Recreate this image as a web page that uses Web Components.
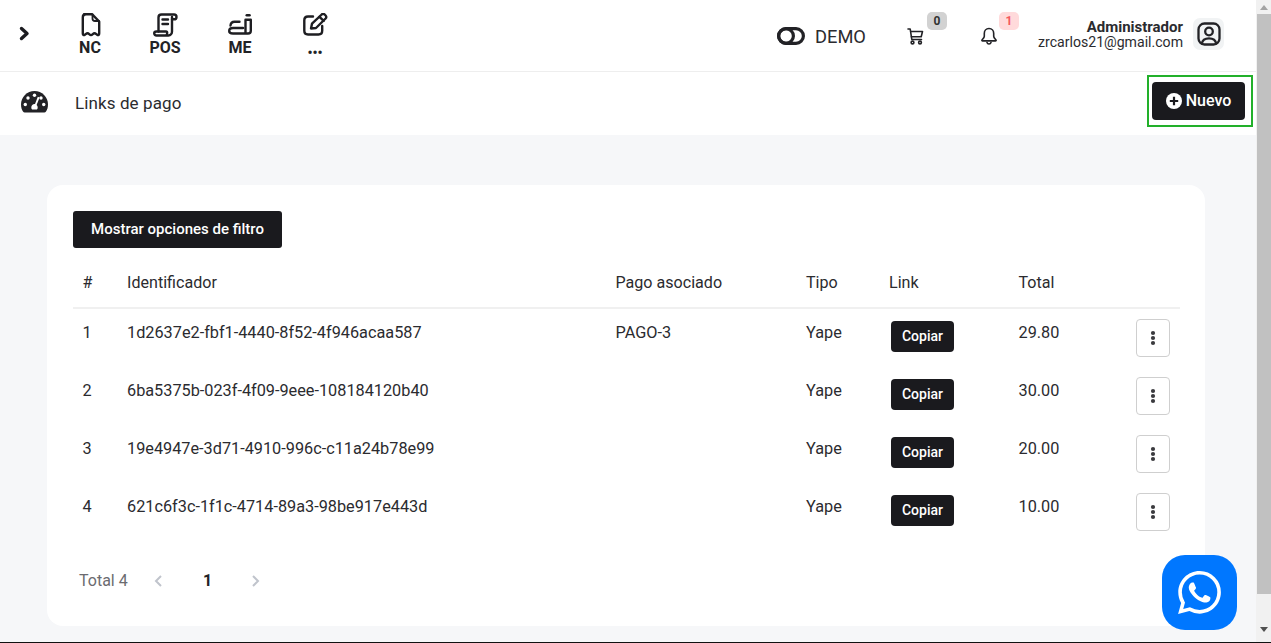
<!DOCTYPE html>
<html lang="es">
<head>
<meta charset="utf-8">
<title>Links de pago</title>
<style>
html,body{margin:0;padding:0;height:643px;overflow:hidden;background:#f6f7f9;font-family:Roboto,"Liberation Sans",sans-serif;color:#2b2b2f}
</style>
</head>
<body>
<app-shell>
  <top-bar></top-bar>
  <page-title heading="Links de pago"></page-title>
  <links-card>
    <link-row n="1" ident="1d2637e2-fbf1-4440-8f52-4f946acaa587" pago="PAGO-3" total="29.80"></link-row>
    <link-row n="2" ident="6ba5375b-023f-4f09-9eee-108184120b40" total="30.00"></link-row>
    <link-row n="3" ident="19e4947e-3d71-4910-996c-c11a24b78e99" total="20.00"></link-row>
    <link-row n="4" ident="621c6f3c-1f1c-4714-89a3-98be917e443d" total="10.00"></link-row>
  </links-card>
</app-shell>
<script>
function el(name, css, html){
  customElements.define(name, class extends HTMLElement{
    connectedCallback(){
      if(this.shadowRoot) return;
      const r=this.attachShadow({mode:'open'});
      const a=k=>this.getAttribute(k)||'';
      r.innerHTML='<style>'+css+'</style>'+(typeof html==='function'?html(a):html);
    }
  });
}
const ICONS={
 nc:'<svg width="24" height="25" viewBox="0 0 24 25" fill="none" stroke="#1e1e22" stroke-width="2.400" stroke-linecap="round" stroke-linejoin="round"><path d="M6 1.300h8.200l7 7.200v12c0 1.300-1 2-2 1.300-1.200-.8-1.600-1.500-2.800-1.500-1.300 0-1.900 1.800-3.400 1.800s-2.100-1.800-3.400-1.800c-1.200 0-1.600.7-2.800 1.500-1 .7-2-.0-2-1.300V4.300c0-1.700 1.300-3 3.200-3z"/><path d="M14.500 1.500v4c0 1.500 1.200 2.500 2.500 2.500h4" stroke-width="1.800"/></svg>',
 pos:'<svg width="25" height="25" viewBox="0 0 25 25" fill="none" stroke="#1e1e22" stroke-width="2.400" stroke-linecap="round" stroke-linejoin="round"><path d="M5.500 18.500V4.500c0-1.700 1.300-3 3-3h12.500c1.500 0 2.500 1.100 2.500 2.400s-1 2.400-2.500 2.400h-2"/><path d="M19 4v14.500c0 2.200-1.400 4-3.600 4H3.500c-1.400 0-2.300-1-2.300-2.200s.9-1.800 2.300-1.800H13c.8 0 1.200.6 1.200 1.400 0 1.200-.6 2.200-1.600 2.600"/><path d="M9.500 6.500h5.500M9.500 11h5.500"/></svg>',
 me:'<svg width="25" height="24" viewBox="0 0 25 24" fill="none" stroke="#1e1e22" stroke-width="2.400" stroke-linecap="round" stroke-linejoin="round"><path d="M11.500 8.800H6.500C4 8.800 2.700 10.500 2.500 12.500"/><path d="M15 15H5c-2.500 0-3.800 1.300-3.800 2.900S2.500 20.500 5 20.500h15c1.700 0 2.800-1.100 2.800-2.800V6.800h-5.300V19.500"/><rect x="17.500" y="1" width="5.300" height="2.600" rx="1.300" fill="#1e1e22" stroke="none"/></svg>',
 pen:'<svg width="25" height="23" viewBox="0 0 25 23" fill="none" stroke="#1e1e22" stroke-width="2.400" stroke-linecap="round" stroke-linejoin="round"><path d="M10 3.500H5c-2.200 0-3.700 1.500-3.700 3.700v10.600c0 2.200 1.500 3.700 3.700 3.700h10.500c2.200 0 3.700-1.500 3.700-3.700V13"/><path d="M8 15.500l1-4.800L18.700 1.500c.9-.8 2-.8 2.900 0l1 1c.8.9.8 2.100 0 3L13 15l-5 .5z"/><path d="M16.500 3.800l4.200 4"/></svg>',
 gauge:'<svg width="27" height="22" viewBox="0 0 27 22"><path fill="#222226" d="M13.500 0C6 0 0 6 0 13.500c0 2.600.7 5 2 7 .4.600 1 1 1.700 1h19.600c.7 0 1.300-.4 1.700-1 1.300-2 2-4.400 2-7C27 6 21 0 13.500 0z"/><g fill="#fff"><circle cx="13.500" cy="4.300" r="1.700"/><circle cx="7" cy="7" r="1.700"/><circle cx="4.300" cy="13.500" r="1.700"/><circle cx="22.700" cy="13.500" r="1.700"/><circle cx="20" cy="7" r="1.700"/><path d="M16.800 5.800l1.800.7-3 7.500c.7.600 1.100 1.400 1.100 2.400 0 .9-.3 1.600-.8 2.200h-4.800c-.5-.6-.8-1.300-.8-2.200 0-1.800 1.500-3.300 3.300-3.300h.4z"/></g></svg>',
 demo:'<svg width="28" height="18" viewBox="0 0 28 18" fill="none" stroke="#222226" stroke-width="3.200"><rect x="1.600" y="1.600" width="24.800" height="14.800" rx="7.400"/><circle cx="9" cy="9" r="7.400"/></svg>',
 cart:'<svg width="17" height="17" viewBox="0 0 17 17" fill="none" stroke="#222226" stroke-width="1.600" stroke-linecap="round" stroke-linejoin="round"><path d="M1 1h2.200l1.600 10.500h9.700"/><path d="M3.700 3.500H15.500l-1.300 5.200H4.400"/><circle cx="5.500" cy="14.500" r="1.400"/><circle cx="13" cy="14.500" r="1.400"/></svg>',
 bell:'<svg width="16" height="18" viewBox="0 0 16 18" fill="none" stroke="#222226" stroke-width="1.600" stroke-linecap="round" stroke-linejoin="round"><path d="M8 1.500c-3 0-4.700 2.300-4.700 5v2.700c0 1.500-1.300 2.600-2.300 3.800-.3.400 0 .9.500.9h13c.5 0 .8-.5.500-.9-1-1.200-2.300-2.300-2.300-3.800V6.500c0-2.700-1.700-5-4.700-5z"/><path d="M6 15.500c.3 1 1 1.500 2 1.500s1.700-.5 2-1.500"/></svg>',
 avatar:'<svg width="24" height="24" viewBox="0 0 24 24" fill="none" stroke="#222226" stroke-width="2.300" stroke-linecap="round" stroke-linejoin="round"><rect x="1.500" y="1.500" width="21" height="21" rx="6"/><circle cx="12" cy="9.500" r="3.800"/><path d="M4.800 21.500c.6-3.500 3-5.200 7.200-5.200s6.600 1.700 7.200 5.200"/></svg>',
 plus:'<svg width="16" height="16" viewBox="0 0 16 16"><circle cx="8" cy="8" r="8" fill="#fff"/><path d="M8 3.800v8.400M3.800 8h8.400" stroke="#1a1a1e" stroke-width="2.200"/></svg>',
 wa:'<svg width="43" height="43" viewBox="0 0 24 24"><path fill="#fff" d="M17.472 14.382c-.297-.149-1.758-.867-2.030-.967-.273-.099-.471-.148-.670.150-.197.297-.767.966-.940 1.164-.173.199-.347.223-.644.075-.297-.150-1.255-.463-2.390-1.475-.883-.788-1.480-1.761-1.653-2.059-.173-.297-.018-.458.130-.606.134-.133.298-.347.446-.520.149-.174.198-.298.298-.497.099-.198.050-.371-.025-.520-.075-.149-.669-1.612-.916-2.207-.242-.579-.487-.500-.669-.510-.173-.008-.371-.010-.570-.010-.198 0-.520.074-.792.372-.272.297-1.040 1.016-1.040 2.479 0 1.462 1.065 2.875 1.213 3.074.149.198 2.096 3.200 5.077 4.487.709.306 1.262.489 1.694.625.712.227 1.360.195 1.871.118.571-.085 1.758-.719 2.006-1.413.248-.694.248-1.289.173-1.413-.074-.124-.272-.198-.570-.347m-5.421 7.403h-.004a9.870 9.870 0 01-5.031-1.378l-.361-.214-3.741.982.998-3.648-.235-.374a9.860 9.860 0 01-1.510-5.260c.001-5.450 4.436-9.884 9.888-9.884 2.640 0 5.122 1.030 6.988 2.898a9.825 9.825 0 012.893 6.994c-.003 5.450-4.437 9.884-9.885 9.884m8.413-18.297A11.815 11.815 0 0012.050 0C5.495 0 .160 5.335.157 11.892c0 2.096.547 4.142 1.588 5.945L.057 24l6.305-1.654a11.882 11.882 0 005.683 1.448h.005c6.554 0 11.890-5.335 11.893-11.893a11.821 11.821 0 00-3.480-8.413z"/></svg>',
 kebab:'<svg width="6" height="16" viewBox="0 0 6 16" fill="#3a3a3e"><circle cx="3" cy="3" r="2.100"/><circle cx="3" cy="8" r="2.100"/><circle cx="3" cy="13" r="2.100"/></svg>'
};

el('app-shell',`
 :host{display:flex;flex-direction:column;height:643px;width:1271px;position:relative;font-family:Roboto,"Liberation Sans",sans-serif}
 .row{display:flex;height:642px;min-height:0}
 .main{width:1256px;flex:none;overflow:hidden;display:flex;flex-direction:column}
 .end{height:1px;background:#111;flex:none}
 .wa{position:absolute;left:1162px;top:555px;width:75px;height:75px;border-radius:23px;background:#0077ff;display:flex;align-items:center;justify-content:center}
`,`<div class="row"><div class="main"><slot></slot></div><fake-scrollbar></fake-scrollbar></div><div class="end"></div><div class="wa">${ICONS.wa}</div>`);

el('fake-scrollbar',`
 :host{display:flex;flex-direction:column;width:15px;background:#f1f1f1;align-items:stretch;flex:none}
 .b{height:14px;display:flex;align-items:center;justify-content:center;flex:none}
 .t{height:580px;background:#c1c1c1;margin-left:1px;flex:none}
 .sp{flex:1}
`,`<div class="b"><svg width="8" height="5" viewBox="0 0 8 5"><path d="M4 0l4 5H0z" fill="#a3a3a3"/></svg></div><div class="t"></div><div class="sp"></div><div class="b" style="padding-bottom:6px"><svg width="8" height="5" viewBox="0 0 8 5"><path d="M0 0h8L4 5z" fill="#505050"/></svg></div>`);

el('nav-shortcut',`
 :host{display:flex;flex-direction:column;align-items:center;width:75px;flex:none;color:#222226}
 .i{height:24px;display:flex;align-items:flex-start;justify-content:center}
 .l{font:700 16px/18px Roboto,"Liberation Sans",sans-serif;margin-top:2px}
 :host([small]) .l{font-size:14px;line-height:10px;margin-top:11px}
`,a=>`<div class="i"><slot></slot></div><div class="l">${a('label')}</div>`);

el('top-bar',`
 :host{display:flex;align-items:flex-start;box-sizing:border-box;background:#fff;border-bottom:1px solid #eeeeee;height:72px;flex:none;position:relative;color:#222226;font-family:Roboto,"Liberation Sans",sans-serif}
 .chev{width:52.500px;flex:none;padding:26px 0 0 19px;box-sizing:border-box;height:50px}
 .nav{display:flex;padding-top:13px}
 .right{margin-left:auto;display:flex;align-items:flex-start;padding-right:32px}
 .demo{display:flex;align-items:center;gap:10px;font-size:18.300px;line-height:24px;padding-top:25px;color:#2b2b2f;width:130px;flex:none}
 .demo svg{display:block;margin-top:-2px}
 .ic{position:relative;flex:none;padding-top:28px}
 .ic svg{display:block}
 .cart{width:73.500px}.bell{width:57.500px;padding-top:27px}
 .badge{position:absolute;top:12px;left:20px;width:20px;height:18px;border-radius:5px;background:#d2d2d2;color:#333;font:700 12px/18px Roboto,"Liberation Sans",sans-serif;text-align:center}
 .bell .badge{left:18.500px;background:#ffdadb;color:#f4585c}
 .u{text-align:right;font-size:14.100px;line-height:15px;padding-top:20px;color:#2b2b2f;white-space:nowrap}
 .u b{display:block;font-weight:700;font-size:15px}
 .av{width:31px;height:32px;margin:18px 0 0 10px;border-radius:7px;background:#f1f3f4;display:flex;align-items:center;justify-content:center;flex:none}
`,`<div class="chev"><svg width="12" height="15" viewBox="0 0 12 15" fill="none" stroke="#1c1c20" stroke-width="3.400" stroke-linecap="round" stroke-linejoin="round"><path d="M2.500 2.500l5.500 5-5.500 5"/></svg></div>
<div class="nav">
 <nav-shortcut label="NC">${ICONS.nc}</nav-shortcut>
 <nav-shortcut label="POS">${ICONS.pos}</nav-shortcut>
 <nav-shortcut label="ME">${ICONS.me}</nav-shortcut>
 <nav-shortcut label="•••" small>${ICONS.pen}</nav-shortcut>
</div>
<div class="right">
 <div class="demo">${ICONS.demo}<span>DEMO</span></div>
 <div class="ic cart">${ICONS.cart}<div class="badge">0</div></div>
 <div class="ic bell">${ICONS.bell}<div class="badge">1</div></div>
 <div class="u"><b>Administrador</b>zrcarlos21@gmail.com</div>
 <div class="av">${ICONS.avatar}</div>
</div>`);

el('page-title',`
 :host{display:flex;align-items:flex-start;justify-content:space-between;height:63px;background:#fff;flex:none;padding:3px 3px 0 21px;box-sizing:border-box;font-family:Roboto,"Liberation Sans",sans-serif}
 .l{display:flex;align-items:center;height:56px}
 .t{margin:0 0 0 27px;font-size:17px;line-height:24px;color:#2b2b2f;letter-spacing:.1px}
 svg{display:block}
 .l svg{margin-top:-2px}
 .box{border:2px solid #22b02a;padding:5px 6px 5px 3px;display:block}
 button{all:unset;box-sizing:border-box;width:93px;height:38px;background:#1a1a1e;color:#fff;border-radius:4px;display:flex;align-items:center;justify-content:center;gap:4px;font:500 16px/20px Roboto,"Liberation Sans",sans-serif}
`,a=>`<div class="l">${ICONS.gauge}<span class="t">${a('heading')}</span></div><div class="box"><button>${ICONS.plus}<span>Nuevo</span></button></div>`);

const COLS='grid-template-columns:54px 488.500px 190.500px 83px 129.500px 90px 71.500px;';
el('links-card',`
 :host{display:block;margin:50px 51px 16px 47px;background:#fff;border-radius:16px;padding:26px 25px 34px 26px;font-family:Roboto,"Liberation Sans",sans-serif;color:#2b2b2f;font-size:16px;line-height:24px}
 .f{all:unset;display:block;box-sizing:border-box;width:209px;height:37px;background:#1a1a1e;color:#fff;border-radius:3px;font:500 15px/37px Roboto,"Liberation Sans",sans-serif;text-align:center}
 .h{display:grid;${COLS}padding-top:23px;box-sizing:border-box;border-bottom:2px solid #f0f0f0;height:61px;font-size:16.100px}
 .h span:first-child{padding-left:9.500px}
 .p{display:flex;align-items:center;box-sizing:border-box;margin-top:27px;padding:1px 0 0 6px;height:24px;color:#6b6b70}
 .p span.n{color:#222226;font-weight:700;width:16px;text-align:center;margin:0 35px 0 37px}
 .p svg{display:block}
 .p .tot{margin-right:25px}
`,`<button class="f">Mostrar opciones de filtro</button>
<div class="h"><span>#</span><span>Identificador</span><span>Pago asociado</span><span>Tipo</span><span>Link</span><span>Total</span></div>
<slot></slot>
<div class="p"><span class="tot">Total 4</span>
<svg width="10" height="14" viewBox="0 0 10 14" fill="none" stroke="#c0c4cc" stroke-width="2"><path d="M8 2L3 7l5 5"/></svg>
<span class="n">1</span>
<svg width="10" height="14" viewBox="0 0 10 14" fill="none" stroke="#c0c4cc" stroke-width="2"><path d="M2 2l5 5-5 5"/></svg></div>`);

el('link-row',`
 :host{display:grid;${COLS}height:58px;box-sizing:border-box;padding-top:11px;font-family:Roboto,"Liberation Sans",sans-serif;color:#2b2b2f;font-size:16.270px;line-height:24px}
 .c{padding-top:1px}
 .c.n{padding-left:9.500px}
 .copy{all:unset;display:block;box-sizing:border-box;width:63px;height:31px;margin:0 0 0 2px;background:#1a1a1e;color:#fff;border-radius:4px;font:500 14px/31px Roboto,"Liberation Sans",sans-serif;text-align:center}
 .act{display:flex;justify-content:flex-end;padding-right:10px;margin-top:-1px}
 .k{width:34px;height:38px;box-sizing:border-box;border:1px solid #cfcfcf;border-radius:4px;background:#fff;display:flex;align-items:center;justify-content:center}
 svg{display:block}
`,a=>`<span class="c n">${a('n')}</span><span class="c">${a('ident')}</span><span class="c">${a('pago')}</span><span class="c">Yape</span><span class="c"><button class="copy">Copiar</button></span><span class="c">${a('total')}</span><div class="act"><div class="k">${ICONS.kebab}</div></div>`);
</script>
</body>
</html>
